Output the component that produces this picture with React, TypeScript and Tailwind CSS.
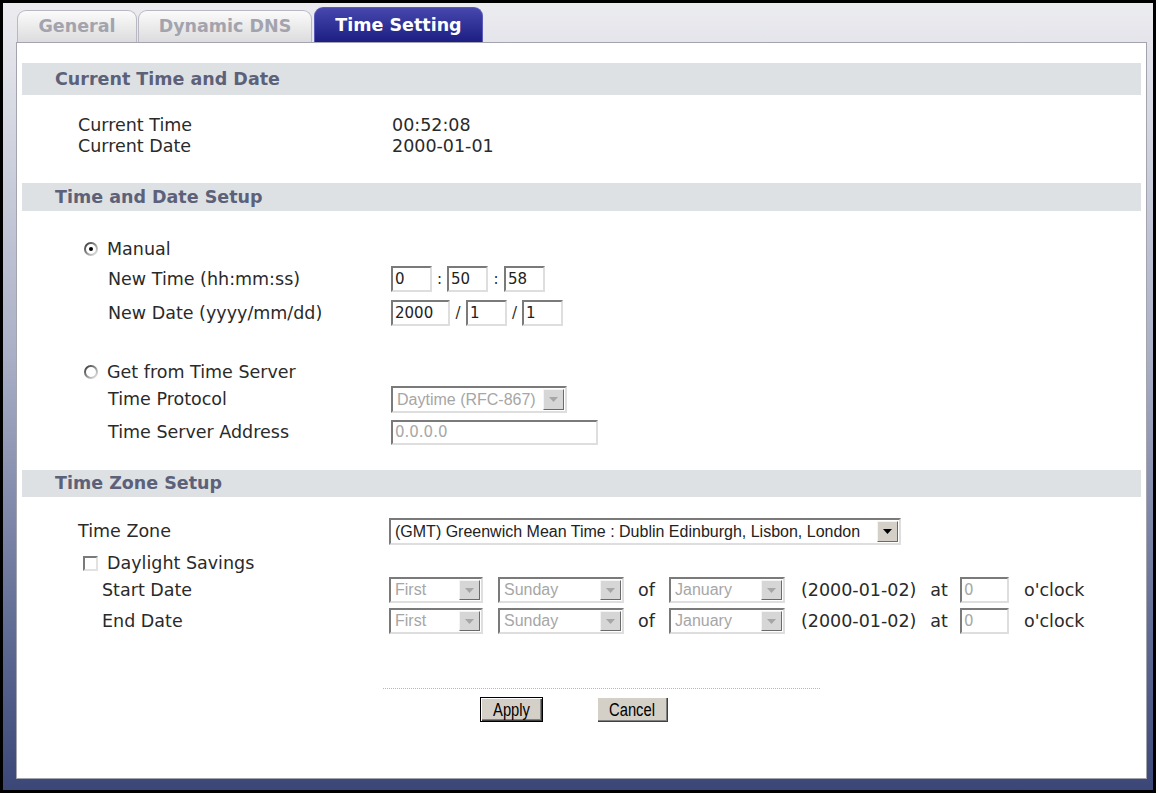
import clsx from "clsx"

// Classic sunken text box used by the router settings pages
function TextBox({ value, className, disabled }: { value: string; className: string; disabled?: boolean }) {
  return (
    <div
      className={clsx(
        "flex h-full items-center border-2 border-t-[#7a7a7a] border-l-[#7a7a7a] border-r-[#dedede] border-b-[#dedede] bg-white pl-[2px] font-['DejaVu_Sans',Verdana,sans-serif] text-[15px] leading-none",
        disabled ? "text-[#a8a8a8]" : "text-[#222]",
        className,
      )}
    >
      {value}
    </div>
  )
}

function Arrow({ disabled }: { disabled?: boolean }) {
  return (
    <div
      className={clsx(
        "m-px flex w-[21px] items-center justify-center border border-t-[#f4f4f4] border-l-[#f4f4f4] border-r-[#6a6a6a] border-b-[#6a6a6a]",
        disabled ? "bg-[#d6d6d6]" : "bg-[#d4d0c8]",
      )}
    >
      <svg width="9" height="5" viewBox="0 0 9 5">
        <polygon points="0,0 9,0 4.5,5" fill={disabled ? "#a6a6a6" : "#000"} />
      </svg>
    </div>
  )
}

function DropDown({ value, className, disabled }: { value: string; className: string; disabled?: boolean }) {
  return (
    <div
      className={clsx(
        "flex h-full items-stretch border-2 border-t-[#7a7a7a] border-l-[#7a7a7a] border-r-[#dedede] border-b-[#dedede] bg-white",
        className,
      )}
    >
      <span
        className={clsx(
          "flex flex-1 items-center pl-[4px] font-['Liberation_Sans',Arial,sans-serif] text-[16px] leading-none whitespace-nowrap",
          disabled ? "text-[#a6a6a6]" : "text-[#222]",
        )}
      >
        {value}
      </span>
      <Arrow disabled={disabled} />
    </div>
  )
}

function Radio({ checked }: { checked?: boolean }) {
  const id = checked ? "radio-on" : "radio-off"
  return (
    <svg width="14" height="14" viewBox="0 0 14 14" className="shrink-0">
      <defs>
        <linearGradient id={id} x1="0" y1="0" x2="1" y2="1">
          <stop offset="0" stopColor="#333" />
          <stop offset="0.55" stopColor="#999" />
          <stop offset="1" stopColor="#eee" />
        </linearGradient>
      </defs>
      <circle cx="7" cy="7" r="6" fill="#fff" stroke={`url(#${id})`} strokeWidth="2" />
      {checked && <circle cx="7" cy="7" r="2" fill="#000" />}
    </svg>
  )
}

function CheckBox() {
  return (
    <div className="h-[15px] w-[15px] shrink-0 border-2 border-t-[#7a7a7a] border-l-[#7a7a7a] border-r-[#e2e2e2] border-b-[#e2e2e2] bg-white" />
  )
}

function SectionHeader({ title, className }: { title: string; className: string }) {
  return (
    <div className={clsx("flex items-center bg-[#dee1e4] pl-[33px] text-[17.5px] font-bold text-[#5c6179]", className)}>
      {title}
    </div>
  )
}

function Tab({ label, className, active }: { label: string; className: string; active?: boolean }) {
  return (
    <div
      className={clsx(
        "flex items-center justify-center rounded-t-[9px] border border-b-0 text-[17.5px] font-bold",
        active
          ? "h-[35px] border-[#5a5ab8] bg-linear-to-b from-[#4747ae] to-[#1d1d82] text-white"
          : "h-[32px] border-[#b9b9c4] bg-linear-to-b from-[#fbfbfb] to-[#dcdcde] text-[#a3a3ad]",
        className,
      )}
    >
      {label}
    </div>
  )
}

function Bevel({ label, className, isDefault }: { label: string; className: string; isDefault?: boolean }) {
  return (
    <button
      className={clsx(
        "flex items-center justify-center bg-[#d4d0c8] shadow-[inset_1px_1px_0_#fff,inset_-1px_-1px_0_#404040,inset_-2px_-2px_0_#808080]",
        isDefault && "border border-black",
        className,
      )}
    >
      <span className="inline-block scale-x-[0.82] font-['Liberation_Sans',Arial,sans-serif] text-[18px] leading-none text-black">
        {label}
      </span>
    </button>
  )
}

export default function App() {
  return (
    <div className="min-h-[793px] w-full bg-white font-['DejaVu_Sans',Verdana,sans-serif] text-[#2a2a2a]">
      <div className="flex h-[793px] w-[1156px] flex-col border-[3px] border-black bg-linear-to-b from-[#ececf0] via-[#a9afc6] via-45% to-[#3b4777] pl-[13px] pr-[6px] pb-[11px]">
        {/* tab strip */}
        <div className="flex h-[39px] items-end pl-px">
          <Tab label="General" className="w-[120px]" />
          <Tab label="Dynamic DNS" className="ml-px w-[174px]" />
          <Tab label="Time Setting" className="ml-[2px] w-[169px]" active />
        </div>

        {/* settings panel */}
        <div className="flex h-[737px] flex-col border border-[#a4a4ae] bg-white px-[5px]">
          <SectionHeader title="Current Time and Date" className="mt-[20px] h-[32px]" />
          <div className="mt-[20px] flex flex-col pl-[56px] text-[17.5px]">
            <div className="flex h-[21px] items-center">
              <span className="w-[314px]">Current Time</span>
              <span>00:52:08</span>
            </div>
            <div className="flex h-[21px] items-center">
              <span className="w-[314px]">Current Date</span>
              <span>2000-01-01</span>
            </div>
          </div>

          <SectionHeader title="Time and Date Setup" className="mt-[26px] h-[28px]" />
          <div className="flex flex-col text-[17.5px]">
            <div className="mt-[27px] flex h-[22px] items-center gap-[9px] pl-[62px]">
              <Radio checked />
              <span>Manual</span>
            </div>
            <div className="mt-[6px] flex h-[26px] items-center pl-[86px]">
              <span className="w-[283px]">New Time (hh:mm:ss)</span>
              <div className="flex h-full items-center">
                <TextBox value="0" className="w-[41px]" />
                <span className="w-[15px] text-center text-[15px]">:</span>
                <TextBox value="50" className="w-[41px]" />
                <span className="w-[16px] text-center text-[15px]">:</span>
                <TextBox value="58" className="w-[41px]" />
              </div>
            </div>
            <div className="mt-[8px] flex h-[26px] items-center pl-[86px]">
              <span className="w-[283px]">New Date (yyyy/mm/dd)</span>
              <div className="flex h-full items-center">
                <TextBox value="2000" className="w-[59px]" />
                <span className="w-[16px] text-center text-[15px]">/</span>
                <TextBox value="1" className="w-[41px]" />
                <span className="w-[15px] text-center text-[15px]">/</span>
                <TextBox value="1" className="w-[41px]" />
              </div>
            </div>

            <div className="mt-[35px] flex h-[22px] items-center gap-[9px] pl-[62px]">
              <Radio />
              <span>Get from Time Server</span>
            </div>
            <div className="mt-[3px] flex h-[27px] items-center pl-[86px]">
              <span className="w-[283px]">Time Protocol</span>
              <DropDown value="Daytime (RFC-867)" className="w-[176px]" disabled />
            </div>
            <div className="mt-[7px] flex h-[25px] items-center pl-[86px]">
              <span className="w-[283px]">Time Server Address</span>
              <TextBox value="0.0.0.0" className="w-[207px]" disabled />
            </div>
          </div>

          <SectionHeader title="Time Zone Setup" className="mt-[25px] h-[27px]" />
          <div className="flex flex-col text-[17.5px]">
            <div className="mt-[21px] flex h-[27px] items-center pl-[56px]">
              <span className="w-[311px]">Time Zone</span>
              <DropDown
                value="(GMT) Greenwich Mean Time : Dublin Edinburgh, Lisbon, London"
                className="w-[512px]"
              />
            </div>
            <div className="mt-[7px] flex h-[22px] items-center gap-[9px] pl-[61px]">
              <CheckBox />
              <span>Daylight Savings</span>
            </div>
            {["Start Date", "End Date"].map((label, i) => (
              <div key={label} className={clsx("flex h-[26px] items-center pl-[80px]", i === 0 ? "mt-[3px]" : "mt-[5px]")}>
                <span className="w-[287px]">{label}</span>
                <DropDown value="First" className="w-[94px]" disabled />
                <DropDown value="Sunday" className="ml-[15px] w-[126px]" disabled />
                <span className="w-[45px] text-center">of</span>
                <DropDown value="January" className="w-[116px]" disabled />
                <span className="ml-[16px]">(2000-01-02)</span>
                <span className="ml-[14px]">at</span>
                <TextBox value="0" className="ml-[12px] w-[49px]" disabled />
                <span className="ml-[15px]">o'clock</span>
              </div>
            ))}
          </div>

          {/* footer actions */}
          <div className="mt-[54px] ml-[361px] w-[437px] border-t border-dotted border-[#b8b8b8]" />
          <div className="mt-[8px] ml-[458px] flex h-[25px] gap-[54px]">
            <Bevel label="Apply" className="w-[63px]" isDefault />
            <Bevel label="Cancel" className="w-[71px]" />
          </div>
        </div>
      </div>
    </div>
  )
}
